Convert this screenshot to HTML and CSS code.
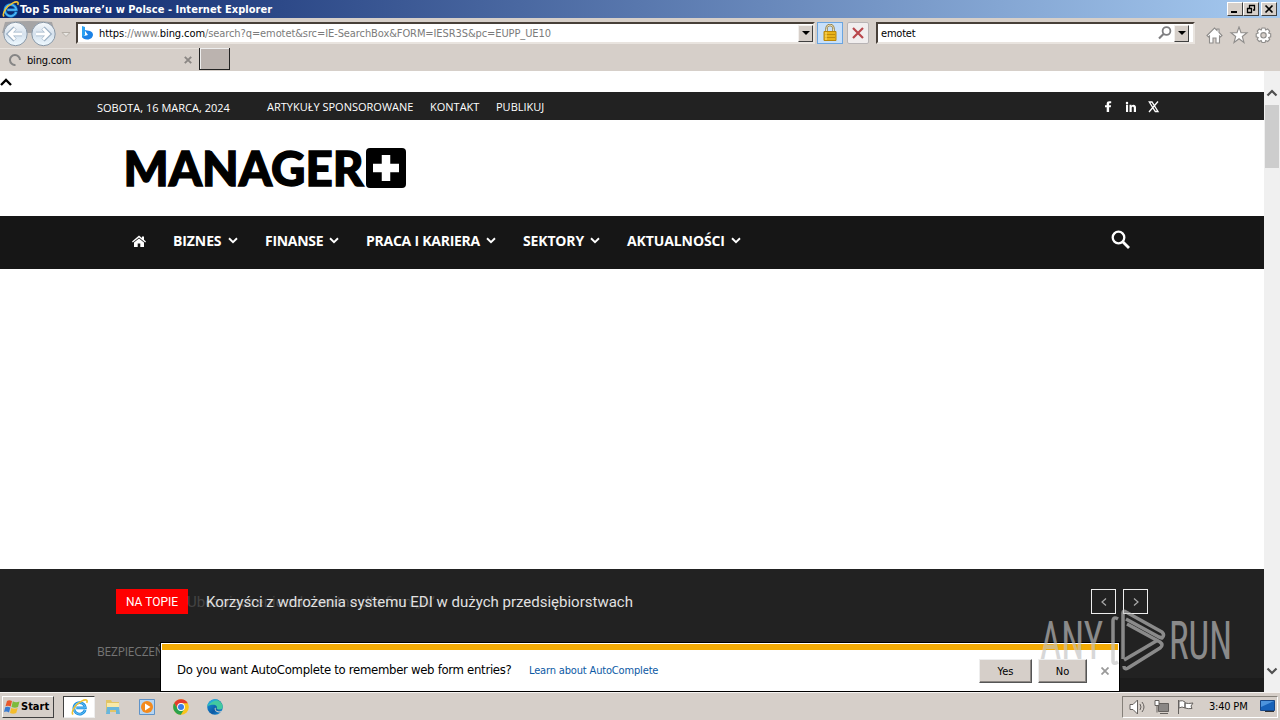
FILE: index.html
```html
<!DOCTYPE html>
<html lang="pl">
<head>
<meta charset="utf-8">
<title>Top 5 malware’u w Polsce</title>
<link rel="stylesheet" href="styles.css">
</head>
<body>
<svg class="defs" width="0" height="0">
  <defs>
    <linearGradient id="orb" x1="0" y1="0" x2="0" y2="1"><stop offset="0" stop-color="#f7fafc"/><stop offset=".5" stop-color="#d5e1ed"/><stop offset="1" stop-color="#eef9ff"/></linearGradient>
    <linearGradient id="edgeg" x1="0" y1="0" x2="1" y2="1"><stop offset="0" stop-color="#1b9de2"/><stop offset=".6" stop-color="#0c59a4"/><stop offset="1" stop-color="#1b9de2"/></linearGradient>
    <symbol id="ie" viewBox="0 0 16 16">
      <path d="M13.3 10.300A5.400 5.400 0 1 1 13.500 8.400H5" fill="none" stroke="#1d8fe0" stroke-width="2.600"/>
      <path d="M13.3 10.300A5.400 5.400 0 1 1 13.500 8.400H5" fill="none" stroke="#7cd0fa" stroke-width=".8"/>
      <path d="M2 14.600C-.5 12.500 4 5 10 2c4-2 6-1.300 4.800 1.600" fill="none" stroke="#f1c232" stroke-width="1.500"/>
    </symbol>
    <symbol id="down" viewBox="0 0 10 7"><path d="M1 1.300 5 5.200l4-3.900" fill="none" stroke="currentColor" stroke-width="1.900"/></symbol>
  </defs>
</svg>
<div class="screen">
  <header class="titlebar">
    <svg class="title-icon" width="17" height="17"><use href="#ie"/></svg>
    <span class="title-text">Top 5 malware’u w Polsce - Internet Explorer</span>
    <div class="win-buttons">
      <span class="win-btn"><svg width="12" height="10"><path d="M2 8h6" stroke="#000" stroke-width="2"/></svg></span>
      <span class="win-btn"><svg width="12" height="10"><path d="M4 1.500h6M4.500 1v3M9.500 1v5.500M8 6h2M2 4.500h5M2.500 4v5M6.500 4v5M2 8.500h5" fill="none" stroke="#000" stroke-width="1.300"/></svg></span>
      <span class="win-btn close"><svg width="12" height="10"><path d="M2.500 1.500l7 7m0-7l-7 7" stroke="#000" stroke-width="1.700"/></svg></span>
    </div>
  </header>

  <div class="address-row">
    <svg class="nav-orbs" width="76" height="29">
      <path d="M5 3Q29 1 52 3L55 14H2z" fill="#a5a4a5"/>
      <circle cx="15.500" cy="15" r="11.700" fill="url(#orb)" stroke="#8998a7"/>
      <circle cx="43.500" cy="15" r="11.700" fill="url(#orb)" stroke="#8998a7"/>
      <path d="M22 15H10M15 9l-6 6 6 6M36 15h12M43 9l6 6-6 6" fill="none" stroke="#9bb0c4" stroke-width="4.500"/>
      <path d="M22 15H10M15 9.500L9.500 15l5.500 5.500M36 15h12M43 9.500l5.500 5.500-5.500 5.500" fill="none" stroke="#fff" stroke-width="2.800"/>
      <path d="M62 13.500h8l-4 4z" fill="#e9e7e3" stroke="#b5afa8"/>
    </svg>
    <div class="field url-field">
      <svg width="11" height="14" viewBox="0 0 11 14"><path d="M0 0l3 1v8l-3 3z" fill="#2aa2f2"/><path d="M2.500 4L8 5q3 1.200 3 4-.5 3.500-4.500 4.500Q1 14 0 10.500L6 9z" fill="#1b82e6"/></svg>
      <span class="url"><b>https</b>://www.<b>bing.com</b>/search?q=emotet&amp;src=IE-SearchBox&amp;FORM=IESR3S&amp;pc=EUPP_UE10</span>
      <span class="drop"></span>
    </div>
    <span class="lock-btn"><svg width="14" height="18" viewBox="0 0 14 18"><path d="M3.500 8V4.500a3.500 3.500 0 0 1 7 0V8" fill="none" stroke="#8f7a42" stroke-width="2.400"/><path d="M3.500 8V4.500a3.500 3.500 0 0 1 7 0V8" fill="none" stroke="#e8dfb8"/><path d="M1 7.500h12v9H1z" fill="#e9b318" stroke="#b8860b"/><path d="M2 10.500h10M2 13.500h10" stroke="#c08c0a"/><path d="M3 8v8" stroke="#ffe27a"/></svg></span>
    <span class="stop-btn"><svg width="12" height="12"><path d="M1 1l10 10M11 1L1 11" stroke="#b9474c" stroke-width="2.200"/></svg></span>
    <div class="field search-field">
      <span class="query">emotet</span>
      <svg width="14" height="14"><circle cx="8.500" cy="5" r="3.900" fill="none" stroke="#7e7e80" stroke-width="1.800"/><path d="M5.500 8L1 12.500" stroke="#7e7e80" stroke-width="2.200"/></svg>
      <span class="drop"></span>
    </div>
    <svg class="tools" width="70" height="18">
      <g fill="#fff" stroke="#8f8d8b" stroke-width="1.100">
        <path d="M1 9.500L8.500 2l2.500 2.500V3h2v3.500l3 3-1.500 1.500-1-1V17h-3.500v-5h-3v5H3.500v-7l-1 1z"/>
        <path d="M33 1l2 5.800h6L36.300 10.500 38 16.500l-5-3.700-5 3.700 1.700-6L25 6.800h6z"/>
        <path d="M56 2h3l.7 2 2-1 2 2-1 2 2 .8v3l-2 .7 1 2-2 2-2-1-.7 2h-3l-.8-2-2 1-2-2 1-2-2-.7v-3l2-.8-1-2 2-2 2 1z"/>
        <circle cx="57.500" cy="9.300" r="2.700" fill="#d6cfc9"/>
      </g>
    </svg>
  </div>

  <div class="tab-row">
    <div class="tab">
      <svg width="12" height="12"><path d="M6.500 11A5 5 0 1 1 11 6" fill="none" stroke="#858585" stroke-width="2"/></svg>
      <span class="tab-name">bing.com</span>
      <svg width="8" height="8"><path d="M.8.800l6.400 6.400M7.200.800L.8 7.200" stroke="#8b8784" stroke-width="1.900"/></svg>
    </div>
    <span class="new-tab"></span>
  </div>

  <div class="viewport">
    <main class="page">
      <div class="to-top"><svg width="12" height="8"><path d="M1 7l5-5 5 5" fill="none" stroke="#000" stroke-width="2.400"/></svg></div>
      <div class="topbar">
        <span class="date">SOBOTA, 16 MARCA, 2024</span>
        <nav class="toplinks"><span class="l1">ARTYKUŁY SPONSOROWANE</span><span class="l2">KONTAKT</span><span class="l3">PUBLIKUJ</span></nav>
        <svg class="social" width="60" height="14">
          <path d="M8.200 1.200v2H7c-.7 0-.9.300-.9.900v1.200h2l-.3 2H6.100V12H3.700V7.300H2v-2h1.700V3.700C3.700 2 4.700 1.200 6.300 1.200z" fill="#fff"/>
          <path d="M23 4.700h2.100V12H23zM24 1.700a1.200 1.200 0 1 1 0 2.500 1.200 1.200 0 0 1 0-2.500M26.500 4.700h2v1c1.200-1.800 4.500-1.400 4.500 1.700V12h-2.200V8c0-1.800-2.100-1.800-2.100 0v4h-2.200z" fill="#fff"/>
          <path d="M46.300 2h2.700l6 9.500h-2.700zM55 1.500L46 12" fill="none" stroke="#fff" stroke-width="1.300"/>
        </svg>
      </div>
      <div class="brand">
        <svg width="282" height="48">
          <text class="logo-text" x="-1.500" y="38" textLength="240" lengthAdjust="spacingAndGlyphs">MANAGER</text>
          <rect x="241" y="0" width="40" height="40" rx="4"/>
          <path d="M261 7v26M248 20h26" stroke="#fff" stroke-width="8.500"/>
        </svg>
      </div>
      <nav class="mainnav">
        <svg class="home" width="14" height="12"><path d="M7 .5l3 2.600V1.500h2v3.300l2 1.700-.8.900L7 2.400.8 7.400 0 6.500zM7 3.500l5 4V12H8.300V8.500H5.700V12H2V7.500z" fill="#fff"/></svg>
        <span class="item i1">BIZNES<svg width="10" height="7"><use href="#down"/></svg></span>
        <span class="item i2">FINANSE<svg width="10" height="7"><use href="#down"/></svg></span>
        <span class="item i3">PRACA I KARIERA<svg width="10" height="7"><use href="#down"/></svg></span>
        <span class="item i4">SEKTORY<svg width="10" height="7"><use href="#down"/></svg></span>
        <span class="item i5">AKTUALNOŚCI<svg width="10" height="7"><use href="#down"/></svg></span>
        <svg class="find" width="20" height="20"><circle cx="7.500" cy="7.500" r="5.800" fill="none" stroke="#fff" stroke-width="2.300"/><path d="M12 12l6 6" stroke="#fff" stroke-width="2.800"/></svg>
      </nav>
      <div class="ad-space"></div>
      <section class="news">
        <div class="ticker">
          <span class="badge">NA TOPIE</span>
          <div class="headlines">
            <span class="old">Ubezpieczenie zdrowotne dla firm „A”</span>
            <span class="current">Korzyści z wdrożenia systemu EDI w dużych przedsiębiorstwach</span>
          </div>
          <span class="arrow"><svg width="6" height="8"><path d="M5 .500L1 4l4 3.500" fill="none" stroke="#aaa" stroke-width="1.200"/></svg></span>
          <span class="arrow"><svg width="6" height="8"><path d="M1 .500L5 4 1 7.500" fill="none" stroke="#aaa" stroke-width="1.200"/></svg></span>
        </div>
        <div class="crumb">BEZPIECZEŃSTWO</div>
      </section>
      <div class="news-end"></div>
    </main>
    <aside class="scrollbar">
      <svg width="12" height="8"><path d="M1.500 6.500l4.500-4.500 4.500 4.500" fill="none" stroke="#505050" stroke-width="2.200"/></svg>
      <span class="thumb"></span>
      <svg class="sb-down" width="12" height="8"><path d="M1.500 1.500L6 6l4.500-4.500" fill="none" stroke="#505050" stroke-width="2.200"/></svg>
    </aside>
  </div>

  <div class="prompt">
    <div class="prompt-body">
      <span class="question">Do you want AutoComplete to remember web form entries?</span>
      <span class="learn">Learn about AutoComplete</span>
      <span class="btn yes">Yes</span>
      <span class="btn no">No</span>
      <svg width="8" height="8"><path d="M.5.500l7 7M7.500.500l-7 7" stroke="#9a9a9a" stroke-width="1.800"/></svg>
    </div>
  </div>

  <svg class="watermark" width="200" height="70">
    <g class="wm-text">
      <text x="0" y="50" textLength="63" lengthAdjust="spacingAndGlyphs">ANY</text>
      <text x="129" y="50" textLength="63" lengthAdjust="spacingAndGlyphs">RUN</text>
    </g>
    <g fill="none" stroke="#c2c2c2" stroke-width="3.500" stroke-linejoin="round">
      <path d="M83 50V4q0-3 3-1l36 20q3 3 0 6l-3-1-33-18"/>
      <path d="M87 15l33 18q4 3 0 6L88 59q-4 2-4-2"/>
      <path d="M84 51l34-20"/>
      <path d="M78 10q-5-3-5 2v40q0 4 5 1"/>
    </g>
  </svg>

  <footer class="taskbar">
    <span class="start"><svg width="16" height="16" viewBox="0 0 16 16"><path d="M3 2q2-1.500 5 0L6.700 7.500Q4 6 1.500 7.200z" fill="#e9582b"/><path d="M8.800 2.300Q12 4 15.500 2.500L14 8q-3 1.500-6.500 0z" fill="#7dbb3c"/><path d="M1.200 8.200q2.500-1.200 5.200.3L5 13.500Q2.500 12 0 13z" fill="#3a7bd0"/><path d="M7.200 9q3.300 1.500 6.500 0l-1.500 5q-3 1.400-6.200 0z" fill="#f5bd2c"/></svg>Start</span>
    <span class="task-active"><svg width="17" height="17"><use href="#ie"/></svg></span>
    <svg class="folder" width="16" height="16"><path d="M1 1h5l1 2h7v10H1z" fill="#e2c566"/><path d="M2 4h12v5H2z" fill="#f8e9a8"/><path d="M2 8h12l1 7h-4v-4H5v4H1z" fill="#68b6dc"/></svg>
    <svg class="player" width="16" height="16"><path d="M.5.500h15v15H.5z" fill="#b6d5f2" stroke="#5f93c8"/><circle cx="8" cy="8" r="6" fill="#f38a1d"/><path d="M6 4.500l5.500 3.500L6 11.500z" fill="#fff"/></svg>
    <svg class="chrome" width="16" height="16" viewBox="0 0 16 16"><circle cx="8" cy="8" r="7.800" fill="#f9c41c"/><path d="M1.200 4.100A7.800 7.800 0 0 1 14.800 4.200H8L4.700 10z" fill="#e33b2e"/><path d="M1.200 4.100A7.800 7.800 0 0 0 7.800 15.800L11.300 10 8 11.500 4.700 10z" fill="#2ba24c"/><circle cx="8" cy="8" r="3.900" fill="#fff"/><circle cx="8" cy="8" r="3" fill="#3a7de8"/></svg>
    <svg class="edge" width="16" height="16" viewBox="0 0 16 16"><circle cx="8" cy="8" r="7.800" fill="url(#edgeg)"/><path d="M.4 7A7.800 7.800 0 0 1 15.800 7.500c0 4-5.800 3.500-6.200 2C11 7 8 4 .4 7z" fill="#42c9a0"/><path d="M.4 7A7.800 7.800 0 0 1 12 1.400C6 1 3 5 .4 7z" fill="#25a8d8"/><path d="M9 8.500q-1.500 3 2 3.800 2 .4 4-.6l-1 1.800Q8 14 7.500 9.500z" fill="#d6cfc9"/></svg>
    <div class="tray">
      <svg width="66" height="16">
        <g fill="#fff" stroke="#65615e">
          <path d="M1 5.500h3L8.500 1v14L4 10.500H1z"/><path d="M11 5q2 3 0 6M13 3q4 5 0 10" fill="none"/>
          <path d="M29.500 4.500h10v8h-10z" fill="#8a8785"/><path d="M31 14.500h8M26 1.500h4v5h-4zM28 6.500v7" />
          <path d="M49.500 1v14M50 2q4-1 6 1v6q-3-2-6 0zM56 4q3 1 8 0l-2 3 1 2.500q-4 .5-7-.5z"/>
        </g>
      </svg>
      <span class="clock">3:40 PM</span>
      <svg width="16" height="13"><path d="M.5.500h14v10H.5z" fill="#1762b9" stroke="#164788"/><path d="M1 1h13L1 7z" fill="#4d94dc"/><path d="M5 11.500h9" stroke="#333"/></svg>
    </div>
  </footer>
</div>
</body>
</html>
```
FILE: styles.css
```css
* { box-sizing: border-box; }
body { margin: 0; }
.defs { position: absolute; }
svg { display: block; flex: none; }
span { white-space: nowrap; }
.screen {
  position: relative;
  width: 1280px;
  height: 720px;
  overflow: hidden;
  display: flex;
  flex-direction: column;
  font-family: "DejaVu Sans Condensed", "DejaVu Sans", sans-serif;
  font-stretch: condensed;
  font-size: 11px;
  color: #000;
}

.titlebar {
  height: 18px;
  flex: none;
  display: flex;
  align-items: center;
  padding: 0 3px 0 2px;
  background: linear-gradient(90deg, #0b256b, #a6caf0);
}
.title-text { margin-left: 1px; color: #fff; font-weight: bold; letter-spacing: .04px; }
.win-buttons { margin-left: auto; display: flex; }
.win-btn {
  width: 16px;
  height: 14px;
  padding: 1px;
  background: #d6cfc9;
  border: 1px solid;
  border-color: #fff #404040 #404040 #fff;
}
.close { margin-left: 2px; }

.address-row {
  height: 30px;
  flex: none;
  display: flex;
  align-items: center;
  background: #d6cfc9;
}
.field {
  height: 22px;
  display: flex;
  align-items: center;
  background: #fff;
  border: 2px solid;
  border-color: #484039 #e9e4df #e9e4df #484039;
}
.url-field { width: 739px; padding-left: 4px; }
.url { margin: 1px 0 0 6px; color: #7b7b7b; letter-spacing: -.09px; }
.url b { font-weight: normal; color: #000; }
.drop {
  width: 15px;
  height: 17px;
  margin-left: auto;
  display: flex;
  align-items: center;
  justify-content: center;
  background: #d6cfc9;
  border: 1px solid;
  border-color: #f3f0ed #404040 #404040 #f3f0ed;
}
.drop::after { content: ""; border: 4px solid transparent; border-top-color: #000; border-bottom: 0; }
.lock-btn, .stop-btn { height: 22px; display: flex; align-items: center; justify-content: center; }
.lock-btn { width: 26px; margin-left: 2px; background: #c8e0fa; border: 1px solid #6ba5e0; }
.stop-btn { width: 22px; margin-left: 4px; background: #f1eeee; border: 1px solid #b8b4b5; border-radius: 2px; }
.search-field { width: 319px; margin-left: 7px; padding: 0 4px 0 3px; }
.query { width: 277px; margin-top: 1px; letter-spacing: -.2px; }
.tools { margin: 3px 0 0 11px; }

.tab-row {
  height: 23px;
  flex: none;
  display: flex;
  background: #d6cfc9;
}
.tab { width: 199px; display: flex; align-items: center; padding-left: 9px; border-top: 1px solid #e7e2dd; }
.tab-name { width: 157px; margin-left: 6px; letter-spacing: -.2px; }
.new-tab {
  width: 31px;
  height: 22px;
  background: #bbb3af;
  border: solid #222;
  border-width: 0 1px 1px 1px;
  box-shadow: inset 1px 1px #eee;
}

.viewport { height: 621px; flex: none; display: flex; }
.page { width: 1264px; display: flex; flex-direction: column; background: #fff; font-family: "Open Sans", sans-serif; font-stretch: normal; }
.to-top { height: 21px; padding-top: 7px; }
.topbar { height: 28px; display: flex; align-items: center; padding: 1px 101px 0 97px; background: #222; color: #fff; }
.date { width: 170px; padding-top: 2px; }
.toplinks { display: flex; }
.l1 { width: 163px; }
.l2 { width: 66px; }
.social { margin-left: auto; }
.brand { height: 96px; padding: 28px 0 0 125px; }
.logo-text { font-family: Lato, sans-serif; font-weight: 900; font-size: 48px; stroke: #000; stroke-width: 1.3px; }
.mainnav {
  height: 53px;
  display: flex;
  align-items: center;
  padding: 0 133px 4px 132px;
  background: #161616;
  color: #fff;
  font-size: 14px;
  font-weight: 700;
  letter-spacing: -.22px;
}
.home { margin-right: 27px; }
.item { display: flex; align-items: center; justify-content: space-between; margin-right: 27px; }
.i1 { width: 65px; letter-spacing: -.1px; }
.i2 { width: 74px; letter-spacing: -.3px; }
.i3 { width: 130px; letter-spacing: -.25px; }
.i4 { width: 77px; letter-spacing: -.15px; }
.i5 { width: 114px; letter-spacing: -.1px; }
.find { margin: 0 0 1px auto; }
.ad-space { height: 300px; }
.news { height: 109px; padding: 20px 116px 0; background: #222; }
.ticker { height: 25px; display: flex; font-family: Roboto, sans-serif; }
.badge { width: 72px; flex: none; background: #f00; color: #fff; font-size: 12px; line-height: 26px; text-align: center; }
.headlines { display: grid; width: 903px; flex: none; font-size: 15px; line-height: 26px; }
.headlines span { grid-area: 1 / 1; }
.old { color: #444; margin-left: -1px; }
.current { margin-left: 18px; color: #e1e1e1; }
.arrow { width: 25px; height: 25px; margin-right: 7px; display: flex; flex: none; align-items: center; justify-content: center; border: 1px solid #eee; }
.crumb { margin: 29px 0 0 -19px; color: #757575; font-size: 12px; line-height: 18px; letter-spacing: -.2px; }
.news-end { height: 14px; background: #1c1c1c; }
.scrollbar { width: 16px; display: flex; flex-direction: column; align-items: center; padding-top: 18px; background: #f0f0f0; }
.thumb { width: 14px; height: 63px; margin-top: 8px; background: #cdcdcd; }
.sb-down { margin: auto 0 17px; }

.prompt {
  position: absolute;
  left: 160px;
  top: 642px;
  width: 960px;
  height: 50px;
  background: #fff;
  border: 1px solid #000;
  padding: 1px;
}
.prompt-body { height: 47px; display: flex; align-items: center; padding: 1px 0 0 15px; border-top: 6px solid #f3ab05; }
.question { width: 352px; margin-bottom: 3px; font-size: 13px; letter-spacing: -.3px; }
.learn { width: 450px; margin-bottom: 2px; color: #0c59a4; letter-spacing: -.16px; }
.btn {
  height: 24px;
  line-height: 23px;
  text-align: center;
  background: #d6cfc9;
  border: 1px solid;
  border-color: #eee #555 #555 #eee;
  box-shadow: inset -1px -1px #8d8884;
}
.yes { width: 53px; }
.no { width: 49px; margin: 0 14px 0 6px; }
.watermark { position: absolute; left: 1040px; top: 609px; opacity: .65; }
.wm-text { fill: #c2c2c2; font-family: Roboto, sans-serif; font-size: 53px; }

.taskbar {
  height: 28px;
  flex: none;
  display: flex;
  align-items: center;
  padding: 0 2px;
  background: #d6cfc9;
  border-top: 1px solid #f5f3f1;
}
.start {
  width: 52px;
  height: 22px;
  display: flex;
  align-items: center;
  gap: 1px;
  padding-left: 1px;
  font-weight: bold;
  border: 1px solid;
  border-color: #fff #404040 #404040 #fff;
}
.task-active {
  width: 32px;
  height: 22px;
  margin-left: 9px;
  padding: 2px 0 0 7px;
  background: #fff;
  border: 1px solid;
  border-color: #404040 #eee #eee #404040;
}
.folder { margin-left: 10px; }
.player, .chrome, .edge { margin-left: 18px; }
.tray {
  width: 156px;
  height: 22px;
  margin-left: auto;
  display: flex;
  align-items: center;
  padding-left: 6px;
  border: 1px solid;
  border-color: #858079 #fff #fff #858079;
}
.clock { width: 51px; margin-left: 14px; letter-spacing: -.2px; }
```
